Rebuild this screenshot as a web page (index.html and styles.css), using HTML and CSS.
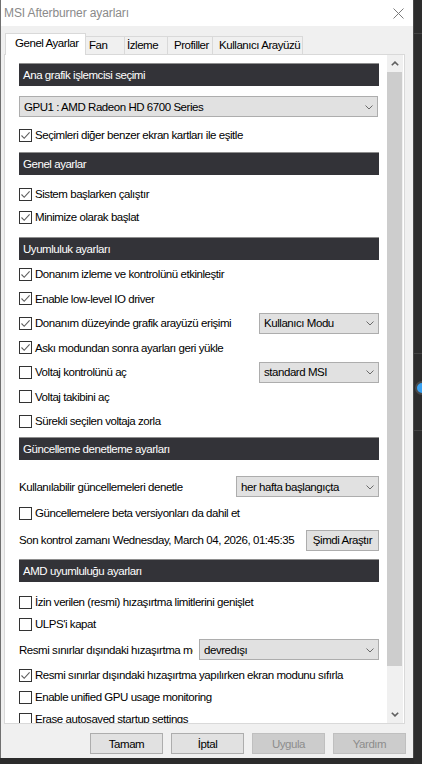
FILE: index.html
```html
<!DOCTYPE html>
<html lang="tr">
<head>
<meta charset="utf-8">
<title>MSI Afterburner ayarları</title>
<link rel="stylesheet" href="styles.css">
</head>
<body>
<div class="backdrop">
  <span class="bd-line bd-line-a"></span>
  <span class="bd-line bd-line-b"></span>
  <span class="bd-line bd-line-c"></span>
  <span class="bd-knob"></span>
</div>
<div class="window">
  <div class="titlebar">
    <span class="title">MSI Afterburner ayarları</span>
    <span class="close"><svg width="11" height="11" viewBox="0 0 11 11"><path d="M0.5 0.5 L10.5 10.5 M10.5 0.5 L0.5 10.5" stroke="#7a7a7a" stroke-width="1" fill="none"/></svg></span>
  </div>
  <div class="tabs">
    <div class="tab active">Genel Ayarlar</div>
    <div class="tab tab-fan">Fan</div>
    <div class="tab tab-izleme">İzleme</div>
    <div class="tab tab-profil">Profiller</div>
    <div class="tab tab-ui">Kullanıcı Arayüzü</div>
  </div>
  <div class="panel">
    <div class="scroll">
      <div class="head">Ana grafik işlemcisi seçimi</div>
      <div class="select full mt10"><span>GPU1 : AMD Radeon HD 6700 Series</span><svg class="chev" width="8" height="5" viewBox="0 0 8 5"><polyline points="0.5,0.5 4,4 7.5,0.5" fill="none" stroke="#6a6a6a" stroke-width="1"/></svg></div>
      <label class="cb mt7"><span class="box"><svg width="11" height="11" viewBox="0 0 11 11"><polyline points="1.5,5.5 4.2,8.3 9.6,2.4" fill="none" stroke="#5d5d5d" stroke-width="1.1"/></svg></span>Seçimleri diğer benzer ekran kartları ile eşitle</label>

      <div class="head mt6">Genel ayarlar</div>
      <label class="cb mt8"><span class="box"><svg width="11" height="11" viewBox="0 0 11 11"><polyline points="1.5,5.5 4.2,8.3 9.6,2.4" fill="none" stroke="#5d5d5d" stroke-width="1.1"/></svg></span>Sistem başlarken çalıştır</label>
      <label class="cb mt1"><span class="box"><svg width="11" height="11" viewBox="0 0 11 11"><polyline points="1.5,5.5 4.2,8.3 9.6,2.4" fill="none" stroke="#5d5d5d" stroke-width="1.1"/></svg></span>Minimize olarak başlat</label>

      <div class="head mt9">Uyumluluk ayarları</div>
      <div class="compat">
        <label class="cb tall"><span class="box"><svg width="11" height="11" viewBox="0 0 11 11"><polyline points="1.5,5.5 4.2,8.3 9.6,2.4" fill="none" stroke="#5d5d5d" stroke-width="1.1"/></svg></span>Donanım izleme ve kontrolünü etkinleştir</label>
        <label class="cb tall"><span class="box"><svg width="11" height="11" viewBox="0 0 11 11"><polyline points="1.5,5.5 4.2,8.3 9.6,2.4" fill="none" stroke="#5d5d5d" stroke-width="1.1"/></svg></span>Enable low-level IO driver</label>
        <div class="cb tall split"><span class="cb-label"><span class="box"><svg width="11" height="11" viewBox="0 0 11 11"><polyline points="1.5,5.5 4.2,8.3 9.6,2.4" fill="none" stroke="#5d5d5d" stroke-width="1.1"/></svg></span>Donanım düzeyinde grafik arayüzü erişimi</span><div class="select w120"><span>Kullanıcı Modu</span><svg class="chev" width="8" height="5" viewBox="0 0 8 5"><polyline points="0.5,0.5 4,4 7.5,0.5" fill="none" stroke="#6a6a6a" stroke-width="1"/></svg></div></div>
        <label class="cb tall"><span class="box"><svg width="11" height="11" viewBox="0 0 11 11"><polyline points="1.5,5.5 4.2,8.3 9.6,2.4" fill="none" stroke="#5d5d5d" stroke-width="1.1"/></svg></span>Askı modundan sonra ayarları geri yükle</label>
        <div class="cb tall split"><span class="cb-label"><span class="box"></span>Voltaj kontrolünü aç</span><div class="select w120"><span>standard MSI</span><svg class="chev" width="8" height="5" viewBox="0 0 8 5"><polyline points="0.5,0.5 4,4 7.5,0.5" fill="none" stroke="#6a6a6a" stroke-width="1"/></svg></div></div>
        <label class="cb tall"><span class="box"></span>Voltaj takibini aç</label>
        <label class="cb tall"><span class="box"></span>Sürekli seçilen voltaja zorla</label>
      </div>

      <div class="head mt3">Güncelleme denetleme ayarları</div>
      <div class="row mt16"><span class="label">Kullanılabilir güncellemeleri denetle</span><div class="select w143"><span>her hafta başlangıçta</span><svg class="chev" width="8" height="5" viewBox="0 0 8 5"><polyline points="0.5,0.5 4,4 7.5,0.5" fill="none" stroke="#6a6a6a" stroke-width="1"/></svg></div></div>
      <label class="cb mt5"><span class="box"></span>Güncellemelere beta versiyonları da dahil et</label>
      <div class="row row-btn mt5"><span class="label clip">Son kontrol zamanı Wednesday, March 04, 2026, 01:45:35</span><button class="btn small">Şimdi Araştır</button></div>

      <div class="head mt8">AMD uyumluluğu ayarları</div>
      <label class="cb mt9"><span class="box"></span>İzin verilen (resmi) hızaşırtma limitlerini genişlet</label>
      <label class="cb"><span class="box"></span>ULPS'i kapat</label>
      <div class="row mt4"><span class="label clip">Resmi sınırlar dışındaki hızaşırtma modu</span><div class="select w180"><span>devredışı</span><svg class="chev" width="8" height="5" viewBox="0 0 8 5"><polyline points="0.5,0.5 4,4 7.5,0.5" fill="none" stroke="#6a6a6a" stroke-width="1"/></svg></div></div>
      <label class="cb mt4"><span class="box"><svg width="11" height="11" viewBox="0 0 11 11"><polyline points="1.5,5.5 4.2,8.3 9.6,2.4" fill="none" stroke="#5d5d5d" stroke-width="1.1"/></svg></span>Resmi sınırlar dışındaki hızaşırtma yapılırken ekran modunu sıfırla</label>
      <label class="cb"><span class="box"></span>Enable unified GPU usage monitoring</label>
      <label class="cb"><span class="box"></span>Erase autosaved startup settings</label>
    </div>
    <div class="scrollbar">
      <div class="sb-btn"><svg width="8" height="5" viewBox="0 0 8 5"><polyline points="0.8,4.3 4,1.1 7.2,4.3" fill="none" stroke="#606060" stroke-width="1.6"/></svg></div>
      <div class="sb-thumb"></div>
      <div class="sb-track"></div>
      <div class="sb-btn"><svg width="8" height="5" viewBox="0 0 8 5"><polyline points="0.8,0.7 4,3.9 7.2,0.7" fill="none" stroke="#606060" stroke-width="1.6"/></svg></div>
    </div>
  </div>
  <div class="buttons">
    <button class="btn">Tamam</button>
    <button class="btn">İptal</button>
    <button class="btn disabled">Uygula</button>
    <button class="btn disabled">Yardım</button>
  </div>
</div>
</body>
</html>
```
FILE: styles.css
```css
* { box-sizing: border-box; }
html, body { margin: 0; padding: 0; }
body {
  width: 422px;
  height: 764px;
  background: #2b2b2b;
  font-family: "Liberation Sans", Arial, sans-serif;
  font-size: 11.5px;
  letter-spacing: -0.45px;
  color: #000;
  position: relative;
  overflow: hidden;
}

/* app behind the dialog */
.backdrop { position: absolute; left: 414px; top: 0; width: 8px; height: 764px; background: #2d2d2d; }
.bd-line { position: absolute; left: 0; width: 8px; height: 1px; background: #444; }
.bd-line-a { top: 33px; }
.bd-line-b { top: 353px; }
.bd-line-c { top: 430px; }
.bd-knob {
  position: absolute; left: 1px; top: 381px;
  width: 14px; height: 14px; border-radius: 50%;
  background: #3aa2f2; border: 2px solid #4a4a4a;
}

.window {
  position: relative;
  width: 414px;
  height: 758px;
  background: #f0f0f0;
  border-left: 1px solid #707070;
  border-right: 1px solid #4a4a4a;
  display: flex;
  flex-direction: column;
}

.titlebar {
  height: 26px; flex: none;
  background: #fff;
  display: flex; align-items: center; justify-content: space-between;
  padding-left: 3px;
}
.title { font-size: 12px; letter-spacing: -0.1px; color: #8a8a8a; }
.close { width: 30px; height: 26px; display: flex; align-items: center; justify-content: center; }

.tabs {
  height: 28px; flex: none;
  display: flex; align-items: flex-end;
  padding-left: 4px;
  position: relative; z-index: 1;
}
.tab {
  height: 18px;
  border: 1px solid #d9d9d9; border-bottom: none; border-left: none;
  background: #f0f0f0;
  line-height: 16px;
  white-space: nowrap;
}
.tab.active {
  width: 81px; height: 22px; margin-bottom: -1px;
  border-left: 1px solid #d9d9d9;
  background: #fff;
  line-height: 18px;
  padding-left: 9px;
}
.tab-fan { width: 39px; padding-left: 3px; }
.tab-izleme { width: 43px; padding-left: 2px; }
.tab-profil { width: 45px; padding-left: 6px; }
.tab-ui { width: 90px; padding-left: 6px; }

.panel {
  flex: none;
  margin-left: 3px;
  width: 401px; height: 670px;
  border: 1px solid #d9d9d9;
  background: #fff;
  display: flex;
}
.scroll {
  flex: 1;
  overflow: hidden;
  padding: 8px 8px 0 14px;
  display: flex; flex-direction: column;
}

.head {
  flex: none;
  height: 23px;
  background: #333338;
  border-top: 1px solid #8e8e8e;
  color: #fff;
  padding-left: 4px;
  display: flex; align-items: center;
}

.mt1 { margin-top: 1px; }
.mt3 { margin-top: 3.5px; }
.mt4 { margin-top: 4px; }
.mt5 { margin-top: 5px; }
.mt6 { margin-top: 6px; }
.mt7 { margin-top: 7px; }
.mt8 { margin-top: 8px; }
.mt9 { margin-top: 9px; }
.mt10 { margin-top: 10px; }
.mt16 { margin-top: 16px; }

.cb {
  flex: none;
  height: 22px;
  display: flex; align-items: center;
  white-space: nowrap;
}
.cb.tall { height: 24.5px; }
.cb.split { justify-content: space-between; }
.cb-label { display: flex; align-items: center; }
.compat { margin-top: 2px; display: flex; flex-direction: column; }

.box {
  flex: none;
  width: 13px; height: 13px;
  border: 1px solid #333;
  background: #fff;
  margin-right: 3px;
  display: flex;
}

.select {
  flex: none;
  height: 21px;
  border: 1px solid #adadad;
  background: #e1e1e1;
  display: flex; align-items: center; justify-content: space-between;
  padding: 0 4px 0 4px;
  white-space: nowrap;
}
.select .chev { margin-top: 1px; }
.select.full { width: 359px; }
.w120 { width: 120px; }
.w143 { width: 143px; }
.w180 { width: 180px; }

.row {
  flex: none;
  height: 21px;
  display: flex; align-items: center; justify-content: space-between;
  white-space: nowrap;
}
.row-btn { height: 22px; }
.label { white-space: nowrap; }
.label.clip { overflow: hidden; flex: 1; min-width: 0; margin-right: 6px; }
.row-btn .label.clip { margin-right: 8px; }

.btn {
  font: inherit;
  letter-spacing: inherit;
  color: #000;
  width: 73px; height: 21px;
  border: 1px solid #adadad;
  background: #e1e1e1;
  padding: 0;
}
.btn.disabled { background: #cccccc; border-color: #bfbfbf; color: #8c8c8c; }

.scrollbar {
  flex: none;
  width: 16px;
  margin-right: 1px;
  background: #f0f0f0;
  display: flex; flex-direction: column;
}
.sb-btn { height: 17px; flex: none; display: flex; align-items: center; justify-content: center; }
.sb-thumb { height: 594px; flex: none; background: #cdcdcd; margin-right: 1px; }
.sb-track { flex: 1; }

.buttons {
  flex: none;
  margin-top: 9px;
  display: flex; justify-content: flex-end; gap: 8px;
  padding-right: 7px;
}
```
